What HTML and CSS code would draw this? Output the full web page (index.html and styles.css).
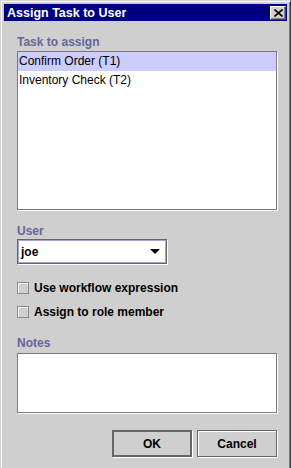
FILE: index.html
```html
<!DOCTYPE html>
<html lang="en">
<head>
    <meta charset="UTF-8">
    <meta name="viewport" content="width=device-width, initial-scale=1.0">
    <title>Assign Task to User</title>
    <link rel="stylesheet" href="styles.css">
</head>
<body>
    <div class="window">
        <div class="titlebar">
            <span class="title">Assign Task to User</span>
            <span class="close">
                <svg width="9" height="8" viewBox="0 0 9 8"><path d="M0.5 0.5 L8.5 7.5 M8.5 0.5 L0.5 7.5" stroke="#000" stroke-width="1.6" fill="none"/></svg>
            </span>
        </div>

        <div class="content">
            <div class="label">Task to assign</div>
            <ul class="list">
                <li class="selected">Confirm Order (T1)</li>
                <li>Inventory Check (T2)</li>
            </ul>

            <div class="label user-label">User</div>
            <div class="combo">
                <span>joe</span>
                <svg width="10" height="5" viewBox="0 0 10 5"><path d="M0 0 H10 L5 5 Z" fill="#000"/></svg>
            </div>

            <div class="checks">
                <label class="check"><span class="box"></span>Use workflow expression</label>
                <label class="check"><span class="box"></span>Assign to role member</label>
            </div>

            <div class="label notes-label">Notes</div>
            <div class="notes"></div>

            <div class="buttons">
                <button type="button" class="btn default">OK</button>
                <button type="button" class="btn">Cancel</button>
            </div>
        </div>
    </div>
</body>
</html>
```

FILE: styles.css
```css
body {
    margin: 0;
    font-family: 'Liberation Sans', Arial, sans-serif;
    font-size: 12px;
    background-color: #cfcfcf;
}

.window {
    box-sizing: border-box;
    height: 468px;
    padding: 3px 3px 0 3px;
    border: 1px solid;
    border-color: #d4d4d4 #404040 #404040 #d4d4d4;
    border-bottom: none;
    box-shadow: inset 1px 1px 0 #fff, inset -1px 0 0 #808080;
    background-color: #cfcfcf;
}

.titlebar {
    height: 17px;
    background-color: #000080;
    display: flex;
    align-items: center;
    justify-content: space-between;
    padding: 0 1px 0 3px;
}

.title {
    color: #fff;
    font-weight: bold;
    font-size: 12.5px;
    line-height: 14px;
}

.close {
    width: 16px;
    height: 14px;
    box-sizing: border-box;
    background-color: #d4d0c8;
    border: 1px solid;
    border-color: #fff #404040 #404040 #fff;
    box-shadow: inset -1px -1px 0 #808080;
    display: flex;
    align-items: center;
    justify-content: center;
}

.content {
    padding: 14px 10px 0 13px;
}

.label {
    color: #666699;
    font-weight: bold;
    line-height: 14px;
    margin-bottom: 2px;
}

.list {
    list-style: none;
    margin: 0;
    padding: 0;
    height: 159px;
    box-sizing: border-box;
    background-color: #fff;
    border: 1px solid #7a7a7a;
    box-shadow: 1px 1px 0 #fff;
}

.list li {
    line-height: 19px;
    padding-left: 1px;
    color: #000;
}

.list li.selected {
    background-color: #ccccff;
}

.user-label {
    margin-top: 14px;
    margin-bottom: 1px;
}

.combo {
    width: 150px;
    height: 25px;
    box-sizing: border-box;
    border: 1px solid #666;
    box-shadow: inset 0 0 0 1px #a3a3d1, 1px 1px 0 #fff;
    background-color: #fff;
    display: flex;
    align-items: center;
    justify-content: space-between;
    padding: 0 6px 0 3px;
    font-weight: bold;
}

.checks {
    margin-top: 16px;
    display: flex;
    flex-direction: column;
    gap: 8px;
}

.check {
    display: flex;
    align-items: center;
    height: 16px;
    line-height: 16px;
    font-weight: bold;
    color: #000;
}

.box {
    width: 12px;
    height: 12px;
    box-sizing: border-box;
    border: 1px solid;
    border-color: #666 #fff #fff #666;
    box-shadow: inset 1px 1px 0 #fff;
    outline: 1px solid #8a8a8a;
    outline-offset: -1px;
    margin-right: 5px;
}

.notes-label {
    margin-top: 16px;
    margin-bottom: 3px;
}

.notes {
    height: 60px;
    box-sizing: border-box;
    background-color: #fff;
    border: 1px solid #7a7a7a;
    box-shadow: 1px 1px 0 #fff;
}

.buttons {
    margin-top: 17px;
    display: flex;
    justify-content: flex-end;
    gap: 5px;
}

.btn {
    width: 80px;
    height: 27px;
    box-sizing: border-box;
    background-color: #cfcfcf;
    border: 1px solid #666;
    box-shadow: inset 1px 1px 0 #fff, 1px 1px 0 #fff;
    font-family: 'Liberation Sans', Arial, sans-serif;
    font-weight: bold;
    font-size: 12px;
    color: #000;
    padding: 0;
}

.btn.default {
    border: 2px solid #666;
    box-shadow: 1px 1px 0 #fff;
}
```
